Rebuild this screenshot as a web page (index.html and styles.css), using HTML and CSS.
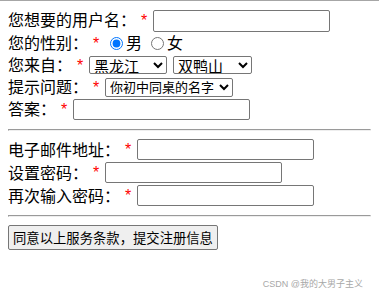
FILE: index.html
```html
<!DOCTYPE html>
<html>
<head>
	<meta charset="utf-8">
	<title>注册</title>
	<link rel="stylesheet" href="styles.css">
</head>
<body>
	<form id="reg" class="reg">
		<div class="row row_name">
			<span class="lbl">您想要的用户名：</span><span class="req">*</span>
			<input class="txt txt_tall" type="text" name="username">
		</div>
		<div class="row row_sex">
			<span class="lbl">您的性别：</span><span class="req">*</span>
			<label class="opt"><input type="radio" name="sex" value="m" checked>男</label>
			<label class="opt"><input type="radio" name="sex" value="f">女</label>
		</div>
		<div class="row row_from">
			<span class="lbl">您来自：</span><span class="req">*</span>
			<select class="sel sel_prov" name="province">
				<option>黑龙江</option>
			</select>
			<select class="sel sel_city" name="city">
				<option>双鸭山</option>
			</select>
		</div>
		<div class="row row_q">
			<span class="lbl">提示问题：</span><span class="req">*</span>
			<select class="sel sel_q" name="question">
				<option>你初中同桌的名字</option>
			</select>
		</div>
		<div class="row row_a">
			<span class="lbl">答案：</span><span class="req">*</span>
			<input class="txt" type="text" name="answer">
		</div>

		<hr>

		<div class="row row_b">
			<span class="lbl">电子邮件地址：</span><span class="req">*</span>
			<input class="txt" type="text" name="email">
		</div>
		<div class="row row_b">
			<span class="lbl">设置密码：</span><span class="req">*</span>
			<input class="txt" type="password" name="pwd">
		</div>
		<div class="row row_b row_last">
			<span class="lbl">再次输入密码：</span><span class="req">*</span>
			<input class="txt" type="password" name="pwd2">
		</div>

		<hr>

		<button class="submit" type="submit">同意以上服务条款，提交注册信息</button>
	</form>

	<div class="mark">CSDN @我的大男子主义</div>
</body>
</html>
```

FILE: styles.css
```css
html { border-top: 1px solid #a6a6a6; }
body {
	margin: 7px 8px 8px;
	font-family: "Liberation Sans", "Noto Sans CJK SC", sans-serif;
	font-size: 16px;
	color: #000;
	background: #fff;
}

/* rows */
.row { display: flex; align-items: center; white-space: nowrap; }
.row_name { height: 25px; }
.row_sex { height: 21px; }
.row_from { height: 22px; }
.row_q { height: 22px; }
.row_a { height: 23px; }
.row_b { height: 23px; align-items: flex-start; }
.row_last { height: 22px; }

.lbl { line-height: 21px; }
.row_b .lbl { line-height: 22px; padding-top: 1px; }
.req {
	width: 6px;
	margin: 0 6px 0 5px;
	color: #f00;
	font-size: 16px;
	line-height: 21px;
}
.row_b .req { line-height: 22px; }

/* controls */
.txt {
	box-sizing: border-box;
	width: 177px;
	height: 21px;
	margin: 0;
	padding: 1px 2px;
	border: 1px solid #767676;
	border-radius: 2px;
	font-family: "Liberation Sans", sans-serif;
	font-size: 13.33px;
}
.txt_tall { height: 22px; }

.opt { display: flex; align-items: center; line-height: 21px; }
.opt + .opt { margin-left: 4px; }
.opt input { width: 13px; height: 13px; margin: 0 3px 0 5px; }

.sel {
	box-sizing: border-box;
	height: 18px;
	margin: 0;
	padding: 0;
	border: 1px solid #767676;
	border-radius: 2px;
	background: #fff;
	font-family: "Liberation Sans", "Noto Sans CJK SC", sans-serif;
	font-size: 15px;
	color: #000;
}
.sel_prov { width: 78px; }
.sel_city { width: 79px; margin-left: 6px; }
.sel_q { width: 128px; height: 19px; font-size: 13px; }

hr { margin: 8px 0; }

.submit {
	box-sizing: border-box;
	display: block;
	width: 210px;
	height: 25px;
	margin: 0;
	padding: 0;
	border: 1px solid #767676;
	border-radius: 2px;
	background: #efefef;
	font-family: "Liberation Sans", "Noto Sans CJK SC", sans-serif;
	font-size: 13.33px;
	color: #000;
}

.mark {
	position: absolute;
	right: 16px;
	bottom: 9px;
	font-size: 9px;
	line-height: 13px;
	color: #a8a8a8;
}
```
